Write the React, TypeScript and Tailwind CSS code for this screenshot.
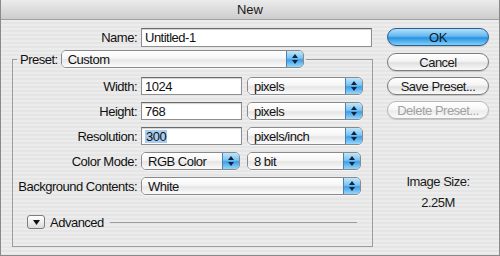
function Arrows() {
  return (
    <svg width="8" height="12" viewBox="0 0 8 12" className="block">
      <path d="M4 1 L7 5 L1 5 Z" fill="#10243f" />
      <path d="M4 11 L7 7 L1 7 Z" fill="#10243f" />
    </svg>
  );
}

function PopUp({ label, className }: { label: string; className: string }) {
  return (
    <div
      className={`flex h-[18px] overflow-hidden rounded-[5px] border border-[#8a8a8a] shadow-[0_1px_0_rgba(255,255,255,0.6)] ${className}`}
    >
      <span className="flex flex-1 items-center whitespace-nowrap bg-[linear-gradient(180deg,#ffffff_0%,#f6f6f6_45%,#e6e6e6_55%,#fbfbfb_100%)] pl-[6px] text-[13px] leading-none">
        {label}
      </span>
      <span className="flex w-[17px] items-center justify-center border-l border-[#4f7fae] bg-[linear-gradient(180deg,#c2e5fb_0%,#79c4f2_45%,#3e9ee6_55%,#96d8fb_100%)]">
        <Arrows />
      </span>
    </div>
  );
}

function TextField({ value, className, selected }: { value: string; className: string; selected?: boolean }) {
  return (
    <div
      className={`flex h-[18px] items-center border border-[#8e8e8e] border-t-[#6a6a6a] bg-white pl-[3px] text-[13px] leading-none shadow-[inset_0_1px_1px_rgba(0,0,0,0.18)] ${className}`}
    >
      {selected ? <span className="bg-[#a9cdf0] px-[1px]">{value}</span> : value}
    </div>
  );
}

function AquaButton({ label, primary, disabled }: { label: string; primary?: boolean; disabled?: boolean }) {
  const look = primary
    ? "border-[#2d5e8e] bg-[linear-gradient(180deg,#b3def9_0%,#62b9f0_45%,#2a92e1_55%,#7fd0f8_100%)] text-[#0b1a2b]"
    : disabled
      ? "border-[#b9b9b9] bg-[linear-gradient(180deg,#ffffff_0%,#f7f7f7_45%,#ececec_55%,#fafafa_100%)] text-[#a2a2a2]"
      : "border-[#7c7c7c] bg-[linear-gradient(180deg,#ffffff_0%,#f4f4f4_45%,#e1e1e1_55%,#f9f9f9_100%)] text-[#1a1a1a]";
  return (
    <div
      className={`flex h-[18px] w-[102px] items-center justify-center whitespace-nowrap rounded-full border text-[13px] leading-none shadow-[0_1px_1px_rgba(0,0,0,0.15)] ${look}`}
    >
      {label}
    </div>
  );
}

function Row({ label, children, className = "mt-[7px]" }: { label: string; children: React.ReactNode; className?: string }) {
  return (
    <div className={`flex h-[18px] items-center ${className}`}>
      <span className="flex w-[124px] justify-end whitespace-nowrap text-[13px] leading-none">{label}</span>
      <div className="ml-[4px] flex items-center">{children}</div>
    </div>
  );
}

export default function App() {
  return (
    <div className="h-[256px] w-[500px] overflow-hidden border-x border-b border-[#8a8a8a] bg-[repeating-linear-gradient(180deg,#ececec_0px,#ececec_2px,#e5e5e5_2px,#e5e5e5_4px)] font-['Liberation_Sans',Arial,sans-serif] tracking-[-0.5px] text-[#111]">
      <div className="flex h-[20px] items-center justify-center border-b border-[#a0a0a0] bg-[linear-gradient(180deg,#ececec_0%,#dcdcdc_50%,#cdcdcd_100%)] text-[13px] tracking-normal text-[#1a1a1a]">
        New
      </div>

      <div className="flex">
        <div className="w-[372px] pt-[8px]">
          <div className="flex h-[19px] items-center">
            <span className="w-[136px] text-right text-[13px] leading-none">Name:</span>
            <TextField value="Untitled-1" className="ml-[4px] h-[19px] w-[231px]" />
          </div>

          <fieldset className="ml-[11px] mt-[3px] w-[361px] border border-[#9c9c9c] pb-[17px]">
            <legend className="ml-[4px] flex items-center pl-[3px] pr-[2px]">
              <span className="text-[13px] leading-none">Preset:</span>
              <PopUp label="Custom" className="ml-[3px] w-[243px]" />
            </legend>

            <Row label="Width:" className="mt-[9px]">
              <TextField value="1024" className="w-[101px]" />
              <PopUp label="pixels" className="ml-[5px] w-[116px]" />
            </Row>
            <Row label="Height:">
              <TextField value="768" className="w-[101px]" />
              <PopUp label="pixels" className="ml-[5px] w-[116px]" />
            </Row>
            <Row label="Resolution:">
              <TextField value="300" selected className="w-[101px]" />
              <PopUp label="pixels/inch" className="ml-[5px] w-[116px]" />
            </Row>
            <Row label="Color Mode:">
              <PopUp label="RGB Color" className="w-[99px]" />
              <PopUp label="8 bit" className="ml-[7px] w-[114px]" />
            </Row>
            <Row label="Background Contents:">
              <PopUp label="White" className="w-[220px]" />
            </Row>

            <div className="mt-[20px] flex h-[14px] items-center">
              <div className="ml-[14px] flex h-[14px] w-[18px] items-center justify-center rounded-[3px] border border-[#7d7d7d] bg-[linear-gradient(180deg,#ffffff_0%,#eeeeee_50%,#dcdcdc_100%)]">
                <svg width="7" height="5" viewBox="0 0 7 5">
                  <path d="M0 0 L7 0 L3.5 5 Z" fill="#111" />
                </svg>
              </div>
              <span className="ml-[5px] text-[13px] leading-none">Advanced</span>
              <div className="ml-[6px] mr-[15px] h-px flex-1 bg-[#9c9c9c]" />
            </div>
          </fieldset>
        </div>

        <div className="ml-[14px] flex w-[102px] flex-col items-center pt-[8px]">
          <div className="h-[19px]">
            <AquaButton label="OK" primary />
          </div>
          <div className="mt-[6px]">
            <AquaButton label="Cancel" />
          </div>
          <div className="mt-[6px]">
            <AquaButton label="Save Preset..." />
          </div>
          <div className="mt-[6px]">
            <AquaButton label="Delete Preset..." disabled />
          </div>
          <div className="mt-[52px] text-center text-[13px] leading-[21px] text-[#1a1a1a]">
            <div>Image Size:</div>
            <div>2.25M</div>
          </div>
        </div>
      </div>
    </div>
  );
}
